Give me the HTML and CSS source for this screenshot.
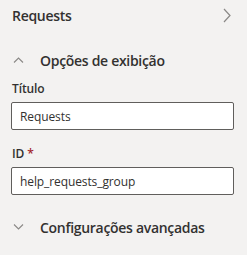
FILE: index.html
```html
<!DOCTYPE html>
<html>
<head>
<meta charset="utf-8">
<link rel="stylesheet" href="styles.css">
</head>
<body>
<div class="panel">
	<div class="header">
		<span class="header-title">Requests</span>
		<svg class="chev-right" width="8" height="15" viewBox="0 0 8 15"><path d="M1 1 L7 7.5 L1 14" fill="none" stroke="#8a8886" stroke-width="1.2"/></svg>
	</div>

	<div class="group-toggle first">
		<svg class="chev" width="11" height="6" viewBox="0 0 11 6"><path d="M1 5.5 L5.5 1 L10 5.5" fill="none" stroke="#8a8886" stroke-width="1.1"/></svg>
		<span class="group-title">Opções de exibição</span>
	</div>

	<div class="field">
		<label class="field-label">Título</label>
		<input class="text-input" value="Requests">
	</div>

	<div class="field second">
		<label class="field-label">ID <span class="required">*</span></label>
		<input class="text-input" value="help_requests_group">
	</div>

	<div class="group-toggle">
		<svg class="chev" width="11" height="6" viewBox="0 0 11 6"><path d="M1 0.5 L5.5 5 L10 0.5" fill="none" stroke="#8a8886" stroke-width="1.1"/></svg>
		<span class="group-title">Configurações avançadas</span>
	</div>
</div>
</body>
</html>
```

FILE: styles.css
```css
body {
  margin: 0;
  background-color: #f3f2f1;
  font-family: "Open Sans", "Noto Sans", sans-serif;
  color: #323130;
}

.panel {
  display: flex;
  flex-direction: column;
}

.header {
  height: 30px;
  display: flex;
  align-items: center;
  justify-content: space-between;
  padding: 0 16px 0 12px;
}

.header-title {
  font-size: 14px;
  font-weight: 600;
  letter-spacing: -0.3px;
}

.chev-right {
  display: block;
}

.group-toggle {
  height: 32px;
  display: flex;
  align-items: center;
  padding-left: 13px;
}

.group-toggle.first {
  margin-top: 14px;
}

.group-toggle .chev {
  display: block;
  margin-right: 16px;
}

.group-title {
  font-size: 14px;
  font-weight: 600;
  letter-spacing: -0.3px;
}

.field {
  display: flex;
  flex-direction: column;
  padding: 0 13px 0 11px;
  margin-top: 3px;
}

.field.second {
  margin-top: 14px;
}

.field-label {
  font-size: 12px;
  font-weight: 600;
  line-height: 20px;
  letter-spacing: -0.1px;
  padding-left: 1px;
  margin-bottom: 3px;
}

.required {
  color: #a4262c;
}

.text-input {
  box-sizing: border-box;
  height: 28px;
  width: 100%;
  margin: 0;
  border: 1px solid #605e5c;
  border-radius: 2px;
  background: #fff;
  padding: 0 8px;
  font-family: inherit;
  font-size: 12px;
  letter-spacing: -0.1px;
  color: #323130;
  outline: none;
}

.field.second + .group-toggle {
  margin-top: 16px;
}
```
